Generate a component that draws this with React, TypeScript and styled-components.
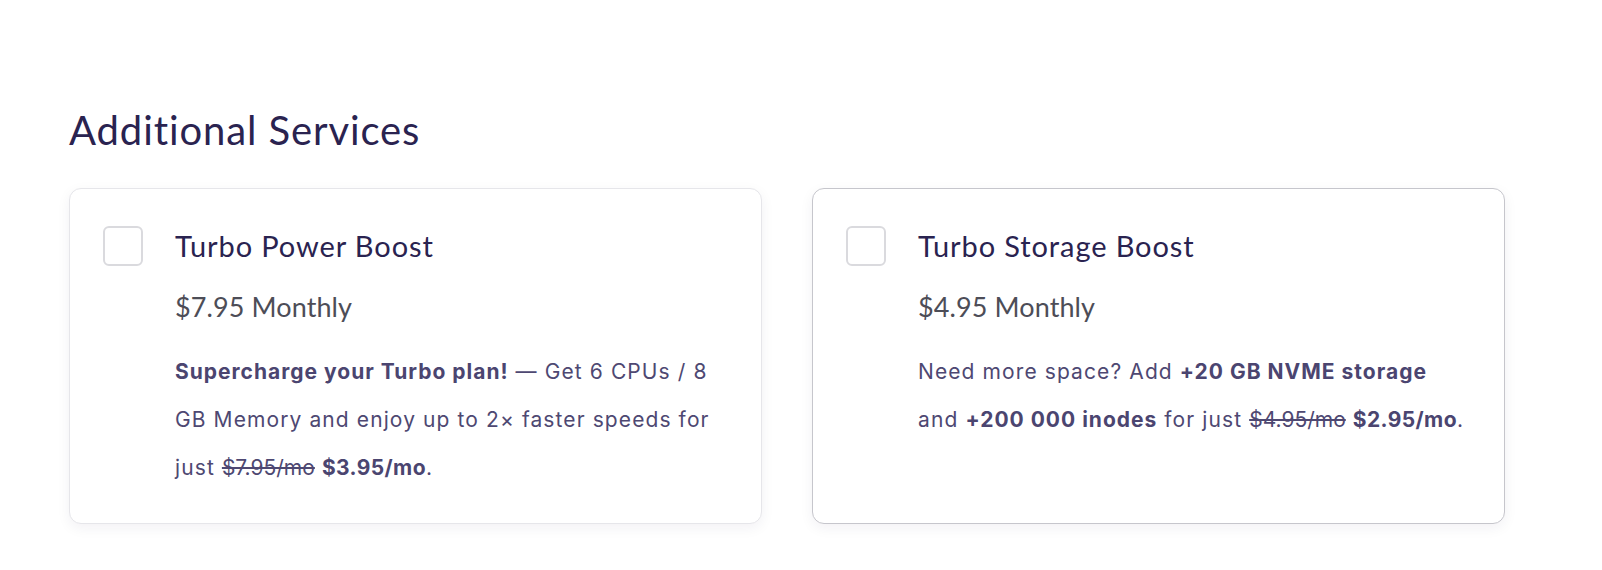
import React from "react";
import styled, { createGlobalStyle } from "styled-components";

const Global = createGlobalStyle`
  html, body { margin: 0; padding: 0; background: #ffffff; }
  body { font-family: "Lato", "Noto Sans", sans-serif; -webkit-font-smoothing: antialiased; }
`;

const Page = styled.div`
  width: 1602px;
  height: 570px;
  box-sizing: border-box;
  padding: 104px 0 0 69px;
`;

const Heading = styled.h2`
  margin: 0 0 32px 0;
  font-weight: 400;
  font-size: 40px;
  line-height: 52px;
  color: #2a2350;
  letter-spacing: 0.9px;
`;

const Grid = styled.div`
  display: grid;
  grid-template-columns: 693px 693px;
  column-gap: 50px;
`;

const Card = styled.label<{ $active?: boolean }>`
  box-sizing: border-box;
  height: 336px;
  display: flex;
  gap: 32px;
  padding: 37px 36px 0 33px;
  border: 1px solid ${(p) => (p.$active ? "#c6c6cc" : "#e6e6ea")};
  border-radius: 12px;
  background: #fff;
  box-shadow: 0 4px 14px rgba(30, 25, 60, 0.06);
  cursor: pointer;
`;

const Check = styled.span`
  flex: none;
  box-sizing: border-box;
  width: 40px;
  height: 40px;
  border: 2px solid #dadade;
  border-radius: 6px;
  background: #fff;
`;

const Content = styled.div`
  flex: 1;
  min-width: 0;
`;

const Title = styled.div`
  font-size: 29px;
  line-height: 40px;
  color: #2a2350;
  letter-spacing: 0.9px;
`;

const Price = styled.div`
  margin-top: 21px;
  font-size: 27px;
  line-height: 40px;
  color: #4d4d57;
  letter-spacing: 0.1px;
`;

const Desc = styled.p`
  margin: 21px 0 0 0;
  font-family: "Inter", "Lato", sans-serif;
  font-size: 21px;
  line-height: 48px;
  letter-spacing: 1.1px;
  color: #4e4872;
`;

const Strong = styled.b`
  font-weight: 700;
  color: #4b4570;
  letter-spacing: 1px;
`;

const Deal = styled.b`
  font-weight: 700;
  color: #4b4570;
  letter-spacing: 0.4px;
`;

const Old = styled.s`
  text-decoration: line-through;
  letter-spacing: 0;
`;

const services = [
  {
    title: "Turbo Power Boost",
    price: "$7.95 Monthly",
    active: false,
    desc: (
      <>
        <Strong>Supercharge your Turbo plan!</Strong> — Get 6 CPUs / 8 GB Memory and enjoy up to 2× faster
        speeds for just <Old>$7.95/mo</Old> <Deal>$3.95/mo</Deal>.
      </>
    ),
  },
  {
    title: "Turbo Storage Boost",
    price: "$4.95 Monthly",
    active: true,
    desc: (
      <>
        Need more space? Add <Strong>+20 GB NVME storage</Strong> and <Strong>+200 000 inodes</Strong> for
        just <Old>$4.95/mo</Old> <Deal>$2.95/mo</Deal>.
      </>
    ),
  },
];

export default function App() {
  return (
    <>
      <Global />
      <Page>
        <Heading>Additional Services</Heading>
        <Grid>
          {services.map((s) => (
            <Card key={s.title} $active={s.active}>
              <Check />
              <Content>
                <Title>{s.title}</Title>
                <Price>{s.price}</Price>
                <Desc>{s.desc}</Desc>
              </Content>
            </Card>
          ))}
        </Grid>
      </Page>
    </>
  );
}
